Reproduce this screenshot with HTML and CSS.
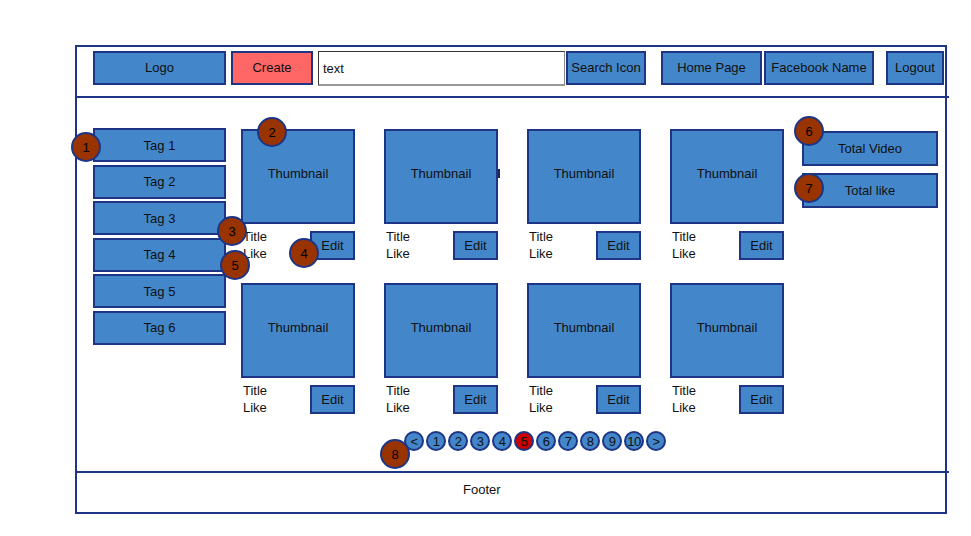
FILE: index.html
```html
<!doctype html>
<html lang="en">
<head>
    <meta charset="UTF-8">
    <meta name="viewport" content="width=device-width, initial-scale=1.0">
    <title>Channel wireframe</title>
    <link rel="stylesheet" href="styles.css">
</head>
<body>
<div class="frame">
    <header class="topbar">
        <div class="box logo">Logo</div>
        <div class="box create">Create</div>
        <input class="search" value="text">
        <div class="box search_btn">Search Icon</div>
        <div class="box home">Home Page</div>
        <div class="box fb">Facebook Name</div>
        <div class="box logout">Logout</div>
    </header>

    <main class="content">
        <ul class="tags">
            <li class="box tag">Tag 1<span class="badge b1">1</span></li>
            <li class="box tag">Tag 2</li>
            <li class="box tag">Tag 3</li>
            <li class="box tag">Tag 4</li>
            <li class="box tag">Tag 5</li>
            <li class="box tag">Tag 6</li>
        </ul>

        <section class="videos">
            <div class="grid">
                <div class="card">
                    <div class="box thumb">Thumbnail<span class="badge b2">2</span></div>
                    <div class="meta">
                        <div class="info">Title<br>Like</div>
                        <div class="box edit">Edit</div>
                    </div>
                    <span class="badge b3">3</span>
                    <span class="badge b4">4</span>
                    <span class="badge b5">5</span>
                </div>
                <div class="card">
                    <div class="box thumb">Thumbnail<span class="stray"></span></div>
                    <div class="meta">
                        <div class="info">Title<br>Like</div>
                        <div class="box edit">Edit</div>
                    </div>
                </div>
                <div class="card">
                    <div class="box thumb">Thumbnail</div>
                    <div class="meta">
                        <div class="info">Title<br>Like</div>
                        <div class="box edit">Edit</div>
                    </div>
                </div>
                <div class="card">
                    <div class="box thumb">Thumbnail</div>
                    <div class="meta">
                        <div class="info">Title<br>Like</div>
                        <div class="box edit">Edit</div>
                    </div>
                </div>
                <div class="card">
                    <div class="box thumb">Thumbnail</div>
                    <div class="meta">
                        <div class="info">Title<br>Like</div>
                        <div class="box edit">Edit</div>
                    </div>
                </div>
                <div class="card">
                    <div class="box thumb">Thumbnail</div>
                    <div class="meta">
                        <div class="info">Title<br>Like</div>
                        <div class="box edit">Edit</div>
                    </div>
                </div>
                <div class="card">
                    <div class="box thumb">Thumbnail</div>
                    <div class="meta">
                        <div class="info">Title<br>Like</div>
                        <div class="box edit">Edit</div>
                    </div>
                </div>
                <div class="card">
                    <div class="box thumb">Thumbnail</div>
                    <div class="meta">
                        <div class="info">Title<br>Like</div>
                        <div class="box edit">Edit</div>
                    </div>
                </div>
            </div>

            <div class="pager">
                <span class="page">&lt;</span>
                <span class="page">1</span>
                <span class="page">2</span>
                <span class="page">3</span>
                <span class="page">4</span>
                <span class="page current">5</span>
                <span class="page">6</span>
                <span class="page">7</span>
                <span class="page">8</span>
                <span class="page">9</span>
                <span class="page">10</span>
                <span class="page">&gt;</span>
                <span class="badge b8">8</span>
            </div>
        </section>

        <aside class="stats">
            <div class="box stat">Total Video<span class="badge b6">6</span></div>
            <div class="box stat">Total like<span class="badge b7">7</span></div>
        </aside>
    </main>

    <footer class="footer">Footer</footer>
</div>
</body>
</html>
```

FILE: styles.css
```css
body {
    margin: 0;
    background-color: #fff;
    font-family: "Liberation Sans", Arial, sans-serif;
    font-size: 13px;
    color: #111;
}

.frame {
    margin: 45px 0 0 75px;
    width: 872px;
    height: 469px;
    box-sizing: border-box;
    border: 2px solid #1d3584;
    display: flex;
    flex-direction: column;
}

/* shared blue wireframe box */
.box {
    position: relative;
    box-sizing: border-box;
    background-color: #4386ca;
    border: 2px solid #1d3584;
    display: flex;
    align-items: center;
    justify-content: center;
    height: 34px;
}

.topbar {
    height: 51px;
    box-sizing: border-box;
    padding: 4px 0 0 16px;
    margin-right: -4px;
    border-bottom: 2px solid #1d3584;
    display: flex;
    align-items: flex-start;
}

.topbar .box {
    padding-bottom: 1px;
}

.logo {
    width: 133px;
}

.create {
    width: 82px;
    margin-left: 5px;
    background-color: #ff6666;
}

.search {
    width: 247px;
    height: 35px;
    margin: 0 0 0 5px;
    box-sizing: border-box;
    border: 1px solid #333;
    border-right-color: #888;
    border-bottom: 2px solid #999;
    padding: 0 4px;
    font-family: "Liberation Sans", Arial, sans-serif;
    font-size: 13px;
    color: #111;
    outline: none;
}

.search_btn {
    width: 80px;
    margin-left: 1px;
}

.home {
    width: 101px;
    margin-left: 15px;
}

.fb {
    width: 110px;
    margin-left: 2px;
}

.logout {
    width: 58px;
    margin-left: 12px;
}

.content {
    height: 373px;
    box-sizing: border-box;
    padding: 30px 0 0 16px;
    display: flex;
    align-items: flex-start;
}

.tags {
    list-style: none;
    margin: 0;
    padding: 0;
    display: flex;
    flex-direction: column;
    gap: 2.6px;
}

.tag {
    width: 133px;
}

.videos {
    margin: 1px 0 0 15px;
}

.grid {
    display: grid;
    grid-template-columns: repeat(4, 114px);
    column-gap: 29px;
    row-gap: 20px;
}

.card {
    position: relative;
    height: 134px;
}

.thumb {
    height: 95px;
    padding-bottom: 6px;
}

.meta {
    display: flex;
    justify-content: space-between;
    align-items: flex-start;
    padding-top: 4px;
}

.info {
    line-height: 17px;
    padding-left: 2px;
}

.edit {
    width: 45px;
    height: 29px;
    margin-top: 3px;
}

.stray {
    position: absolute;
    right: -4px;
    top: 38px;
    width: 2px;
    height: 9px;
    background-color: #1d2a55;
}

.pager {
    position: relative;
    display: flex;
    gap: 2px;
    margin: 14px 0 0 163px;
}

.page {
    width: 20px;
    height: 20px;
    box-sizing: border-box;
    border-radius: 50%;
    border: 2px solid #1d3584;
    background-color: #4386ca;
    display: flex;
    align-items: center;
    justify-content: center;
    font-size: 13px;
    letter-spacing: -0.5px;
}

.page.current {
    background-color: #cc0000;
}

.stats {
    margin: 3px 0 0 18px;
    display: flex;
    flex-direction: column;
    gap: 7px;
}

.stat {
    width: 136px;
    height: 35px;
}

.footer {
    flex: 1;
    margin-right: -4px;
    border-top: 2px solid #1d3584;
    padding: 9px 0 0 386px;
    font-size: 13px;
}

/* numbered callouts */
.badge {
    position: absolute;
    width: 30px;
    height: 30px;
    box-sizing: border-box;
    border-radius: 50%;
    border: 2px solid #1d3584;
    background-color: #993300;
    display: flex;
    align-items: center;
    justify-content: center;
    font-size: 13px;
    color: #000;
    z-index: 5;
}

.b1 { left: -24px; top: 2px; }
.b2 { left: 14px; top: -14px; }
.b3 { left: -24px; top: 87px; }
.b4 { left: 48px; top: 109px; }
.b5 { left: -21px; top: 121px; }
.b6 { left: -10px; top: -17px; }
.b7 { left: -10px; top: -2px; }
.b8 { left: -24px; top: 8px; }
```
